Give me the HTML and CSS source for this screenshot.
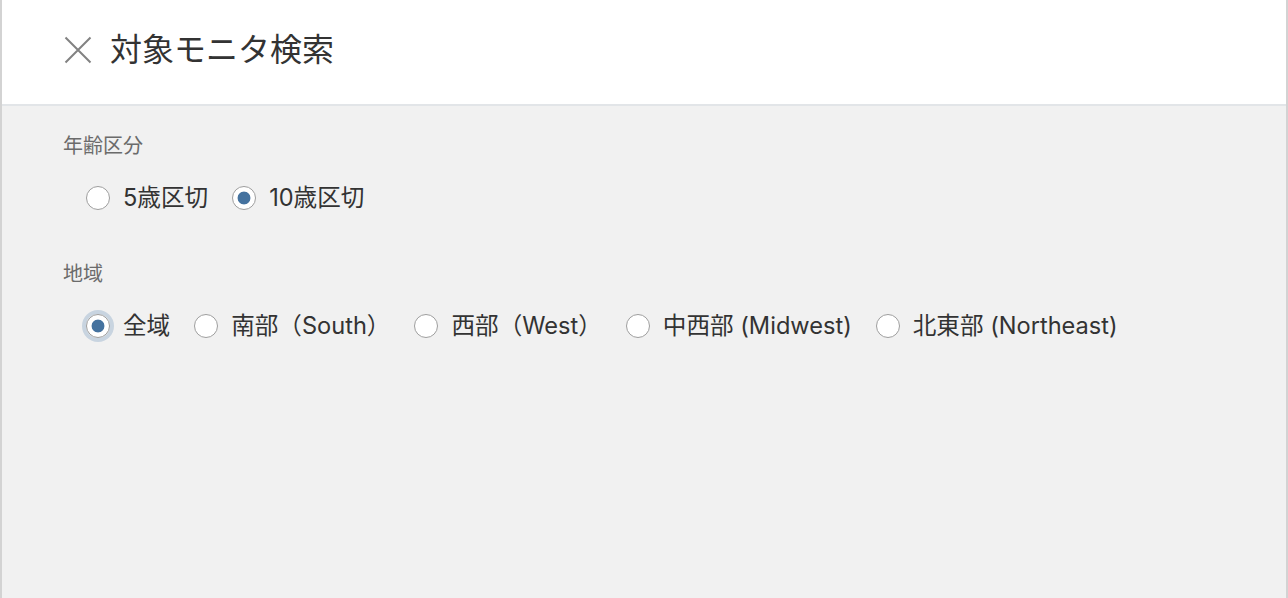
FILE: index.html
```html
<!DOCTYPE html>
<html lang="ja">
<head>
<meta charset="utf-8">
<title>対象モニタ検索</title>
<link rel="stylesheet" href="styles.css">
</head>
<body>
<div class="page">
  <header class="header">
    <svg class="close" viewBox="0 0 28 28" width="28" height="28" aria-hidden="true">
      <path d="M1.5 1.5 L26.5 26.5 M26.5 1.5 L1.5 26.5" stroke="#828282" stroke-width="2" fill="none"/>
    </svg>
    <h1 class="title">対象モニタ検索</h1>
  </header>
  <main class="body">
    <section class="group">
      <div class="group-label">年齢区分</div>
      <div class="options">
        <label class="option"><input class="radio" type="radio" name="age"><span>5歳区切</span></label>
        <label class="option"><input class="radio" type="radio" name="age" checked><span>10歳区切</span></label>
      </div>
    </section>
    <section class="group group-second">
      <div class="group-label">地域</div>
      <div class="options">
        <label class="option"><input class="radio radio-focus" type="radio" name="area" checked><span>全域</span></label>
        <label class="option"><input class="radio" type="radio" name="area"><span>南部（South）</span></label>
        <label class="option"><input class="radio" type="radio" name="area"><span>西部（West）</span></label>
        <label class="option"><input class="radio" type="radio" name="area"><span>中西部 (Midwest)</span></label>
        <label class="option"><input class="radio" type="radio" name="area"><span>北東部 (Northeast)</span></label>
      </div>
    </section>
  </main>
</div>
</body>
</html>
```

FILE: styles.css
```css
html, body {
  margin: 0;
  padding: 0;
}
body {
  font-family: "Inter", "Noto Sans CJK JP", sans-serif;
  color: #333;
  background: #f1f1f1;
}
.page {
  height: 598px;
  box-sizing: border-box;
  border-left: 2px solid #d3d3d3;
  border-right: 2px solid #d3d3d3;
  background: #f1f1f1;
}
.header {
  height: 106px;
  box-sizing: border-box;
  padding-bottom: 4px;
  background: #fff;
  border-bottom: 2px solid #e2e5e8;
  display: flex;
  align-items: center;
  padding-left: 62px;
}
.close {
  flex: none;
  margin-right: 18px;
}
.title {
  margin: 0;
  font-size: 32px;
  font-weight: 400;
  color: #333;
  line-height: 40px;
}
.body {
  padding: 28px 0 0 61px;
}
.group-label {
  font-size: 20px;
  line-height: 24px;
  color: #6b6b6b;
}
.group-second {
  margin-top: 49px;
}
.options {
  display: flex;
  align-items: center;
  gap: 24px;
  margin-top: 25px;
  padding-left: 23px;
}
.option {
  display: flex;
  align-items: center;
  gap: 13px;
  font-size: 23.6px;
  line-height: 30px;
  color: #333;
}
.radio {
  appearance: none;
  -webkit-appearance: none;
  margin: 0;
  width: 24px;
  height: 24px;
  box-sizing: border-box;
  border: 1.5px solid #9e9e9e;
  border-radius: 50%;
  background: #fff;
}
.radio:checked {
  background: radial-gradient(circle, #44729f 0 6px, #fff 6.8px);
}
.radio-focus {
  box-shadow: 0 0 0 4px #c8d4e0;
}
```
